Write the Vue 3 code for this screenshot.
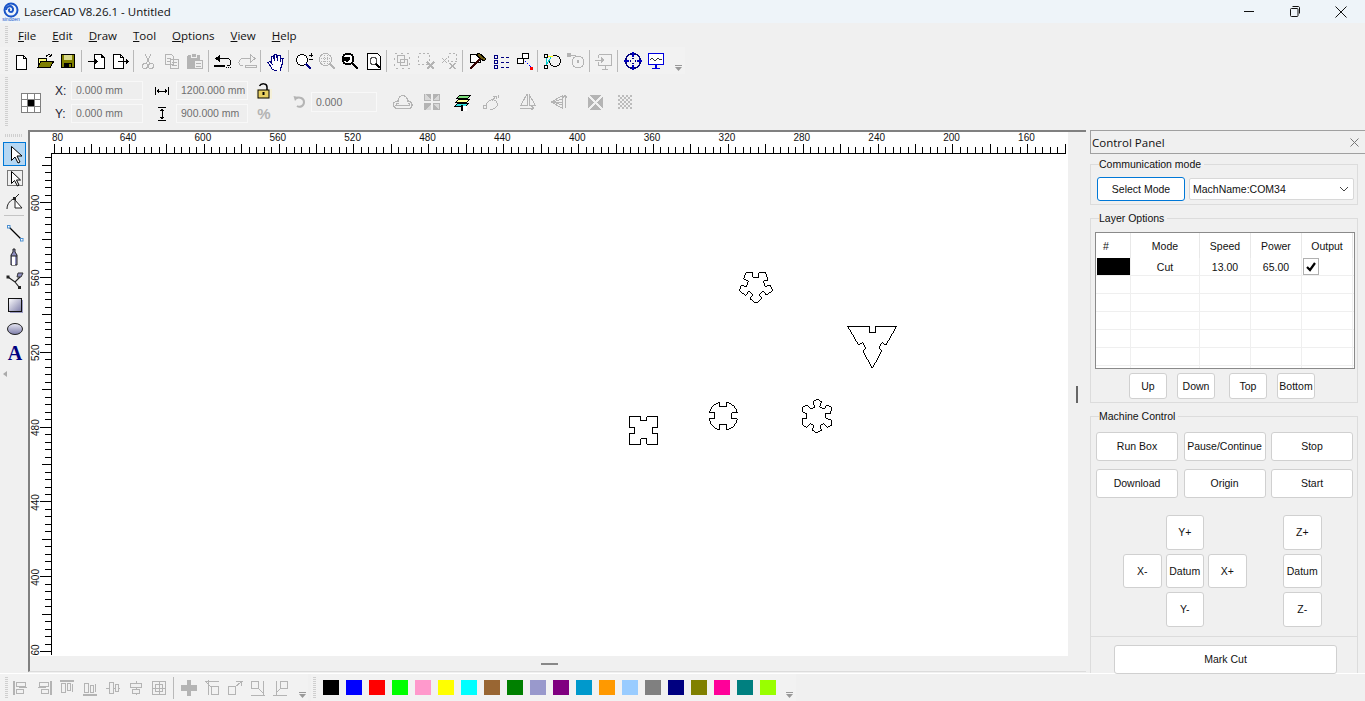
<script setup>
// greyed out icons share one wrapper
const dim = (s) => `<g fill="none" stroke="#b4b4b4">${s}</g>`;
const DOC = "h7l3 3v11h-10z";

const menus = [
  { key: "F", rest: "ile" },
  { key: "E", rest: "dit" },
  { key: "D", rest: "raw" },
  { key: "T", rest: "ool" },
  { key: "O", rest: "ptions" },
  { key: "V", rest: "iew" },
  { key: "H", rest: "elp" },
];

const topIcons = [
  `<path d="M5.5 4.5${DOC}" fill="#fff" stroke="#000"/><path d="M12.5 4.5v3h3" fill="none" stroke="#000"/>`,
  `<path d="M3 16V8l2-1h6v3H6z" fill="#ffff80" stroke="#000"/><path d="M3 16.5l3-6.5h13l-4 6.5z" fill="#808000" stroke="#000"/><path d="M11 6c1-3 4-3 5-1M16 5l1-2M16 5h-2.5" fill="none" stroke="#000"/>`,
  `<rect x="3.5" y="3.5" width="13" height="13" fill="#808000" stroke="#000"/><rect x="6" y="4" width="8" height="5" fill="#d9d98c"/><rect x="6" y="12" width="8" height="5" fill="#000"/><rect x="11" y="13" width="2" height="3" fill="#808000"/>`,
  "sep",
  `<path d="M8.5 3.5h6.5l3 3v11h-9.5z" fill="#fff" stroke="#000"/><path d="M15 3.5v3h3M2 10.5h8" fill="none" stroke="#000"/><path d="M9 8l3 2.5-3 2.5z"/>`,
  `<path d="M3.5 3.5${DOC}" fill="#fff" stroke="#000"/><path d="M10.5 3.5v3h3M8 10.5h9" fill="none" stroke="#000"/><path d="M16 8l3 2.5-3 2.5z"/>`,
  "sep",
  dim(`<circle cx="7" cy="15" r="2.5"/><circle cx="13" cy="15" r="2.5"/><path d="M8 13l5-10M12 13L7 3"/>`),
  dim(`<path d="M3.5 3.5h6l2 2v8h-8zM8.5 8.5h8v9h-8zM5 7h4M5 10h3M10 11h5M10 14h5"/>`),
  `<rect x="2" y="4" width="13" height="14" rx="2" fill="#b4b4b4"/><rect x="6" y="2" width="5" height="4" fill="#b4b4b4" stroke="#f0f0f0"/><path d="M9.5 9.5h8v8h-8z" fill="#f0f0f0" stroke="#b4b4b4"/><path d="M11 12h5M11 15h5" stroke="#b4b4b4"/>`,
  "sep",
  `<path d="M6 7.5h7c4 0 5 2 5 4s-2 3.5-4 3.5" fill="none" stroke="#000"/><path d="M2 7.5l5-4v8z"/><rect x="1" y="14" width="11" height="2"/><path d="M13 16.5h5" stroke="#000" stroke-dasharray="1 1"/>`,
  dim(`<path d="M14 7.5H7c-4 0-5 2-5 4s2 3.5 4 3.5M18 7.5l-5-4v8zM8 14.5h11v1.5H8z"/>`),
  "sep",
  `<path d="M7.5 18.5L3 11.5l2-1 2 2.500L6.500 6l2-1 1 5 0-7h2l1 7 .5-6 2 .5 0 6 1-3.500 2 .5-1 6-1 3-1 4.500z" fill="#fff" stroke="#000080"/>`,
  "sep",
  `<circle cx="8" cy="9" r="5.5" fill="#fff" stroke="#000"/><path d="M12 13l5 5" stroke="#000080" stroke-width="2"/><path d="M15 4h4M17 2v4M15 8h4" stroke="#000"/>`,
  dim(`<circle cx="8.5" cy="8.5" r="6"/><path d="M4 7h9M4 10h9M7 4v9M10 4v9" stroke-dasharray="1 1"/><path d="M13 13l5 5" stroke-width="2"/>`),
  `<circle cx="8" cy="8" r="5.5" fill="#fff" stroke="#000" stroke-width="2"/><path d="M4 6h6v2l-3 3-3-1z"/><path d="M12 12l6 6" stroke="#000" stroke-width="2"/>`,
  `<path d="M3.5 2.5h10l3 3v13h-13z" fill="#fff" stroke="#000"/><circle cx="9.5" cy="10" r="3.5" fill="none" stroke="#555"/><path d="M12 13l4 4" stroke="#000" stroke-width="2"/>`,
  "sep",
  dim(`<rect x="2.5" y="2.5" width="15" height="15" stroke-dasharray="2 4"/><rect x="5.5" y="4.5" width="7" height="7"/><rect x="8.5" y="8.5" width="7" height="6"/>`),
  dim(`<rect x="2.5" y="2.5" width="11" height="11" stroke-dasharray="2 2"/><path d="M11 11l7 7M18 11l-7 7" stroke-width="1.6"/>`),
  dim(`<rect x="9.5" y="2.5" width="8" height="8" stroke-dasharray="2 2"/><path d="M3 7l5 5M8 7l-5 5M10 12l7 6M17 12l-7 6" stroke-width="1.3"/>`),
  "sep",
  `<rect x="3.5" y="3.5" width="10" height="8" fill="#fff" stroke="#000"/><path d="M3 18L13 8" stroke="#300" stroke-width="2"/><path d="M9 4l3-2 7 6-2 2z" fill="#6b5a10" stroke="#000"/>`,
  `<path d="M3.5 4.5h3v3h-3zM3.5 9.5h3v3h-3zM3.5 14.5h3v3h-3zM10 6h3M10 11h3M10 16h3M15 6h3M15 11h3M15 16h3" fill="none" stroke="#000080"/>`,
  `<rect x="8.5" y="2.5" width="6" height="5" fill="#fff" stroke="#000"/><rect x="3.5" y="7.5" width="6" height="5" fill="#fff" stroke="#000"/><path d="M11 10l6 6" stroke="#00f" stroke-dasharray="1.5 1"/><rect x="16" y="16" width="3" height="3" fill="#f00"/>`,
  "sep",
  `<circle cx="13" cy="10" r="5.5" fill="none" stroke="#000"/><path d="M4 5h7" stroke="#ff0"/><path d="M4 5v10M4 15l5-9" stroke="#0cc"/><rect x="2.5" y="3.5" width="3" height="3" fill="#fff" stroke="#000"/><rect x="2.5" y="14.5" width="3" height="3" fill="#fff" stroke="#000"/>`,
  dim(`<circle cx="12" cy="11" r="6"/><path d="M2 4h8"/><path d="M12 9v3" stroke-width="2"/><rect x="1" y="2" width="3" height="3" fill="#b4b4b4"/>`),
  "sep",
  dim(`<path d="M5 3.5h12.5v11h-13V11M4.5 7V3.5M8 18h6M11 14.5V18M1 9h8"/><path d="M7 6l3 3-3 3z" fill="#b4b4b4"/>`),
  "sep",
  `<circle cx="10" cy="10" r="7.5" fill="none" stroke="#000080" stroke-width="1.5"/><path d="M10 1v5M10 14v5M1 10h5M14 10h5" stroke="#0000c0" stroke-width="2"/><path d="M6 10l2-1v2zM14 10l-2-1v2zM10 6l-1 2h2zM10 14l-1-2h2z" fill="#000080"/>`,
  `<rect x="2.5" y="2.5" width="15" height="11" fill="#fff" stroke="#0000e0" stroke-width="1.5"/><path d="M4 9l2-2 3 3 3-3 2 2 2-1" fill="none" stroke="#333"/><path d="M10 14v3M6 17.5h8" stroke="#0000e0" stroke-width="1.5"/>`,
];

const checkerRows = [4, 6, 8, 10, 12, 14, 16].map((y, i) => `M${i % 2 ? 5 : 3} ${y}H17`).join("");

const propIcons = [
  { gap: 16, svg: dim(`<path d="M5 9C2 9 0 11 .5 13.5S3 16.5 5 16.5h10c3 0 4.5-2 4-4.5s-3-3-4.5-3C14.5 6 12.5 3.5 10 3.5S5 6 5 9z" stroke-width="1.3"/><path d="M6 11c-2 0-3 1-3 2.5h13.5c.5-1 0-2.5-2-2.5"/>`) },
  { gap: 9, svg: `<path d="M2 2h7v7H2zM11 2h7v7h-7zM2 11h7v7H2zM11 11h7v7h-7z" fill="#b4b4b4"/><path d="M3 2l6 6-6 0zM17 2v6h-6zM9 12v6H3zM11 12h6v6z" fill="#d8d8d8"/>` },
  { gap: 11, svg: `<path d="M4 6l3-3h11l-3 3z" fill="#7fe07f" stroke="#000"/><path d="M3 10l3-3h11l-3 3z" fill="#ffff99" stroke="#000"/><path d="M2 14l3-3h11l-3 3z" fill="#30e0e0" stroke="#000"/><path d="M9 13v6" stroke="#000" stroke-width="1.5"/><rect x="10" y="14" width="4" height="5" fill="#fff"/>` },
  { gap: 9, svg: dim(`<path d="M4 14c0-4 4-7 8-6 3 1 4 4 3 6s-4 4-7 3"/><rect x="1.5" y="13.5" width="3" height="3"/><path d="M10 9l4-5M11 4h3v3M16 3v3"/>`) },
  { gap: 16, svg: dim(`<path d="M9 2v11H3zM11 2v11h6zM2 16h14M13 14l3 2-3 2"/>`) },
  { gap: 11, svg: dim(`<path d="M13 4v12L2 10zM13 10H2M13 7L4 10l9 3M16 16V3M14 6l2-3 2 3"/>`) },
  { gap: 17, svg: `<rect x="2" y="3" width="15" height="15" fill="#b4b4b4"/><path d="M2 3l15 15M17 3L2 18" stroke="#f0f0f0" stroke-width="2.5"/>` },
  { gap: 9, svg: `<path d="${checkerRows}" stroke="#bcbcbc" stroke-width="2" stroke-dasharray="2 2"/>` },
];

const leftIcons = [
  { active: true, svg: `<path d="M6.5 2.5v14l3.5-3.5 3 6 2-1-3-6h5z" fill="#fff" stroke="#000"/>` },
  { svg: `<rect x="2.5" y="2.5" width="15" height="15" fill="none" stroke="#000" stroke-dasharray="1 1"/><path d="M6.5 3.5v12l3-3 3 5.5 1.5-1-2.5-5h4z" fill="#fff" stroke="#000"/>` },
  { svg: `<path d="M2 17c0-6 4-9 8-11l4-4" fill="none" stroke="#222"/><path d="M10 8l7 8h-7z" fill="#fff" stroke="#222"/><rect x="8" y="5" width="3" height="3" fill="#222"/>` },
  { sep: true },
  { svg: `<path d="M4 4l12 12" stroke="#000" stroke-width="1.3"/><rect x="2.5" y="2.5" width="2.5" height="2.5" fill="#fff" stroke="#4a8ed0"/><rect x="15.5" y="15.5" width="2.5" height="2.5" fill="#fff" stroke="#4a8ed0"/>` },
  { svg: `<path d="M6 18V8l2-3V2h2v3l2 3v10z" fill="#8d8dc0" stroke="#222"/><path d="M7 18V9h3v9z" fill="#fff"/><path d="M6 9h6" stroke="#222"/>` },
  { svg: `<path d="M3 6l7 5 5-5M10 11l4 5" fill="none" stroke="#222" stroke-width="1.2"/><rect x="1.5" y="4.5" width="3" height="3" fill="#222"/><rect x="13" y="15" width="3" height="3" fill="#222"/><path d="M13 2h5l-2 4h-4z" fill="#8d8dc0" stroke="#333"/>` },
  { svg: `<defs><linearGradient id="lg1" x1="0" y1="0" x2="1" y2="1"><stop offset="0" stop-color="#fff"/><stop offset="1" stop-color="#7c7ca8"/></linearGradient></defs><rect x="5" y="5" width="13" height="13" fill="#9c9cc4"/><rect x="3.5" y="3.5" width="13" height="13" fill="url(#lg1)" stroke="#111"/>` },
  { svg: `<defs><linearGradient id="lg2" x1="0" y1="0" x2="0" y2="1"><stop offset="0" stop-color="#e8e8f4"/><stop offset="1" stop-color="#7c7ca8"/></linearGradient></defs><ellipse cx="10" cy="10" rx="7.5" ry="5.5" fill="url(#lg2)" stroke="#222"/>` },
  { svg: `<text x="10" y="17" text-anchor="middle" font-family="Liberation Serif" font-weight="700" font-size="20" fill="#000080">A</text>` },
];

const alignIcons = [
  dim(`<path d="M3 3v14" stroke-width="2"/><rect x="5.5" y="4.5" width="9" height="4"/><rect x="5.5" y="11.5" width="7" height="4"/><path d="M8 9.5h8"/>`),
  dim(`<path d="M17 3v14" stroke-width="2"/><rect x="5.5" y="4.5" width="9" height="4"/><rect x="7.5" y="11.5" width="7" height="4"/><path d="M4 9.5h8"/>`),
  dim(`<path d="M3 3h14" stroke-width="2"/><rect x="4.5" y="5.5" width="4" height="9"/><rect x="10.5" y="5.5" width="3" height="7"/><path d="M15.5 6v8"/>`),
  dim(`<path d="M3 17h14" stroke-width="2"/><rect x="4.5" y="5.5" width="4" height="9"/><rect x="10.5" y="7.5" width="3" height="7"/><path d="M15.5 6v8"/>`),
  dim(`<path d="M3 10h14"/><rect x="6.5" y="4.5" width="4" height="11" fill="#f0f0f0"/><rect x="12.5" y="6.5" width="3" height="7" fill="#f0f0f0"/>`),
  dim(`<path d="M10 3v14"/><rect x="4.5" y="5.5" width="11" height="4" fill="#f0f0f0"/><rect x="6.5" y="11.5" width="7" height="4" fill="#f0f0f0"/>`),
  dim(`<rect x="3.5" y="3.5" width="13" height="13"/><path d="M10 3v14M3 10h14"/><rect x="6.5" y="6.5" width="7" height="7"/>`),
  "sep",
  `<path d="M8 2h4v5h6v6h-6v5H8v-5H2V7h6z" fill="#b4b4b4"/>`,
  dim(`<path d="M3 3h14M6 2v15"/><rect x="9.5" y="8.5" width="7" height="8"/><path d="M4 4l5 5"/>`),
  dim(`<path d="M16 3v5M11 3h7"/><rect x="3.5" y="8.5" width="7" height="8"/><path d="M16 4l-6 5"/>`),
  dim(`<path d="M3 17h14M15 3v15"/><rect x="3.5" y="3.5" width="7" height="7"/><path d="M10 10l5 5"/>`),
  dim(`<path d="M2 17h14M5 3v15"/><rect x="9.5" y="3.5" width="7" height="7"/><path d="M10 10l-5 5"/>`),
];

const palette = [
  "#000000", "#0000ff", "#ff0000", "#00ff00", "#ff99cc", "#ffff00", "#00ffff",
  "#996633", "#008000", "#9999cc", "#800080", "#0099cc", "#ff9900", "#99ccff",
  "#808080", "#000080", "#808000", "#ff0099", "#008080", "#99ff00",
];

const machineButtons = ["Run Box", "Pause/Continue", "Stop", "Download", "Origin", "Start"];
const jogButtons = [
  { label: "Y+", col: 2, row: 1 },
  { label: "Z+", col: 5, row: 1 },
  { label: "X-", col: 1, row: 2 },
  { label: "Datum", col: 2, row: 2 },
  { label: "X+", col: 3, row: 2 },
  { label: "Datum", col: 5, row: 2 },
  { label: "Y-", col: 2, row: 3 },
  { label: "Z-", col: 5, row: 3 },
];

// ruler, in page pixels
const STEP = 7.487;
const hTicks = [];
for (let i = 0; i <= 135; i++) {
  const top = i % 5 === 0 ? 144 : 147;
  hTicks.push(`M${Math.round(54 + i * STEP) + 0.5} ${top}V153`);
}
const vTicks = [];
for (let i = -6; i <= 60; i++) {
  const k = ((i % 10) + 10) % 10;
  const left = k === 0 ? 40 : k === 5 ? 42 : 45;
  vTicks.push(`M${left} ${Math.round(202 + i * STEP) + 0.5}H51`);
}
const rulerPath = [...hTicks, ...vTicks].join("");
const hLabels = ["640", "600", "560", "520", "480", "440", "400", "360", "320", "280", "240", "200", "160"];
const vLabels = ["600", "560", "520", "480", "440", "400", "60"];
</script>

<template>
  <div class="app">
    <div class="titlebar">
      <svg class="logo" viewBox="0 0 18 20" width="18" height="20">
        <circle cx="9" cy="8" r="6.5" fill="none" stroke="#1a55c8" stroke-width="2"/>
        <path d="M4 8c0-3 4-5 6-3s1 5-1 5-3-2-1-3" fill="none" stroke="#1a55c8" stroke-width="2"/>
        <text x="9" y="19" text-anchor="middle" font-size="5" font-family="Liberation Sans" fill="#1a55c8">sindoen</text>
      </svg>
      <span class="title-text">LaserCAD V8.26.1 - Untitled</span>
      <div class="win-buttons">
        <svg viewBox="0 0 12 12" width="12" height="12"><path d="M1 5.5h10" stroke="#111"/></svg>
        <svg viewBox="0 0 12 12" width="12" height="12"><rect x="1.5" y="2.5" width="7.5" height="8" rx="1" fill="none" stroke="#111"/><path d="M3.5 .5h6a1.5 1.5 0 0 1 1 1v6" fill="none" stroke="#111"/></svg>
        <svg viewBox="0 0 12 12" width="12" height="12"><path d="M.5 .5l11 11M11.5 .5l-11 11" stroke="#111"/></svg>
      </div>
    </div>

    <div class="menubar">
      <span class="grip"></span>
      <span v-for="m in menus" :key="m.key" class="menu-item"><u>{{ m.key }}</u>{{ m.rest }}</span>
    </div>

    <div class="toolbar">
      <span class="grip"></span>
      <template v-for="(icon, i) in topIcons" :key="i">
        <span v-if="icon === 'sep'" class="tb-sep"></span>
        <span v-else class="tb-btn"><svg viewBox="0 0 20 20" width="20" height="20" shape-rendering="crispEdges" v-html="icon"></svg></span>
      </template>
      <svg class="more" viewBox="0 0 7 6" width="7" height="6"><path d="M0 0h7v1H0zM0 2h7L3.5 6z" fill="#999"/></svg>
    </div>

    <div class="propbar">
      <span class="grip"></span>
      <svg class="anchor" viewBox="0 0 20 20" width="20" height="20" shape-rendering="crispEdges">
        <path d="M.5 .5h19v19H.5zM6.5 .5v19M13.5 .5v19M.5 6.5h19M.5 13.5h19" fill="#fff" stroke="#808080"/>
        <rect x="7" y="7" width="6" height="6"/>
      </svg>
      <div class="coords">
        <span class="coord-label">X:</span>
        <span class="field">0.000 mm</span>
        <svg class="size-icon" viewBox="0 0 14 14" width="14" height="14" shape-rendering="crispEdges"><path d="M.5 3v8M13.5 3v8M3 7h8" stroke="#000"/><path d="M1 7l3-2.5v5zM13 7l-3-2.5v5z"/></svg>
        <span class="field">1200.000 mm</span>
        <svg class="lock" viewBox="0 0 16 16" width="16" height="16"><rect x="0" y="6" width="16" height="10" fill="#f5f0d8"/><path d="M11 7V4C11 0 5 0 3.5 3" fill="none" stroke="#000" stroke-width="1.5"/><rect x="2" y="7" width="11" height="8" fill="#e8d060" stroke="#000"/><rect x="6.5" y="9" width="2" height="3"/></svg>
        <span class="coord-label">Y:</span>
        <span class="field">0.000 mm</span>
        <svg class="size-icon" viewBox="0 0 14 14" width="14" height="14" shape-rendering="crispEdges"><path d="M3 .5h8M3 13.5h8M7 3v8" stroke="#000"/><path d="M7 1L4.5 4h5zM7 13l-2.5-3h5z"/></svg>
        <span class="field">900.000 mm</span>
        <span class="percent">%</span>
      </div>
      <svg class="rotate-icon" viewBox="0 0 20 20" width="20" height="20"><path d="M7 6.5c3-2 8-.5 8 3.5s-4 6-7 4" fill="none" stroke="#b4b4b4" stroke-width="2"/><path d="M4.5 4l5 1-3.5 4z" fill="#b4b4b4"/></svg>
      <span class="field rotate-field">0.000</span>
      <svg v-for="(p, i) in propIcons" :key="i" viewBox="0 0 20 20" width="20" height="20" shape-rendering="crispEdges" :style="{ marginLeft: p.gap + 'px' }" v-html="p.svg"></svg>
    </div>

    <div class="main">
      <div class="left-tools">
        <span class="grip-h"></span>
        <template v-for="(t, i) in leftIcons" :key="i">
          <span v-if="t.sep" class="lt-sep"></span>
          <span v-else class="lt-btn" :class="{ active: t.active }"><svg viewBox="0 0 20 20" width="20" height="20" v-html="t.svg"></svg></span>
        </template>
        <svg class="lt-more" viewBox="0 0 4 6" width="4" height="6"><path d="M4 0v6L0 3z" fill="#aaa"/></svg>
      </div>

      <div class="workspace">
        <div class="canvas-row">
          <svg class="canvas" viewBox="30 132 1038 524" width="1038" height="524">
            <path d="M51 153.5H1066M51.5 153V655" stroke="#000" fill="none" shape-rendering="crispEdges"/>
            <path :d="rulerPath" stroke="#000" fill="none" shape-rendering="crispEdges"/>
            <text x="52" y="141" class="ruler-text">80</text>
            <text v-for="(l, i) in hLabels" :key="l" :x="128 + i * 74.87" y="141" text-anchor="middle" class="ruler-text">{{ l }}</text>
            <text v-for="(l, i) in vLabels" :key="i" text-anchor="middle" class="ruler-text" :transform="`translate(38.5 ${i === 6 ? 650 : 203 + i * 74.87}) rotate(-90)`">{{ l }}</text>

            <!-- traced from the drawing, at 3x -->
            <g transform="translate(620 260) scale(.3333)" fill="none" stroke="#000" stroke-width="3" shape-rendering="crispEdges">
              <path d="M28 470H62V483H80V470H113V502H97V520H113V553H80V536H62V553H28V520H45V502H28Z"/>
              <path d="M300 441H320V427A42 42 0 0 1 352 459H335V477H352A42 42 0 0 1 320 510V493H300V510A42 42 0 0 1 268 477H285V459H268A42 42 0 0 1 300 427Z"/>
              <path d="M378 38H398V52H416V38H437L444 60L430 64L436 80L450 75L459 92L439 105L430 94L417 104L426 115L408 130L390 116L399 104L386 94L377 106L358 92L364 75L379 80L385 62L371 58Z"/>
              <path d="M592 418L605 425L599 441L611 447L622 435L635 442L632 461L617 459L617 475L633 480L636 495L622 503L611 491L600 497L605 511L590 518L577 511L582 497L570 491L559 503L547 493L546 477L561 475L561 461L548 457L549 441L561 435L572 447L584 441L579 425Z"/>
              <path d="M683 199H748V218H766V199H830L798 255L786 248L776 265L786 272L757 325L728 272L738 265L728 248L716 255Z"/>
            </g>
          </svg>
          <div class="split-v"><span></span></div>
        </div>
        <div class="split-h"><span></span></div>
      </div>

      <div class="panel">
        <div class="panel-title">
          <span>Control Panel</span>
          <svg viewBox="0 0 9 9" width="9" height="9"><path d="M.5 .5l8 8M8.5 .5l-8 8" stroke="#777"/></svg>
        </div>

        <div class="group group-comm">
          <span class="legend">Communication mode</span>
          <button class="btn btn-mode">Select Mode</button>
          <div class="select">
            <span>MachName:COM34</span>
            <svg viewBox="0 0 10 6" width="10" height="6"><path d="M1 1l4 4 4-4" fill="none" stroke="#444"/></svg>
          </div>
        </div>

        <div class="group group-layer">
          <span class="legend">Layer Options</span>
          <div class="layer-table">
            <div class="lt-head">
              <span class="c0 hash">#</span><span class="c1">Mode</span><span class="c2">Speed</span><span class="c2">Power</span><span class="c2">Output</span>
            </div>
            <div class="lt-row">
              <span class="c0 swatch"></span><span class="c1">Cut</span><span class="c2">13.00</span><span class="c2">65.00</span>
              <span class="c2 check-cell">
                <span class="checkbox"><svg viewBox="0 0 12 12" width="12" height="12"><path d="M2 6l3 3 5-7" fill="none" stroke="#000" stroke-width="2.2"/></svg></span>
              </span>
            </div>
            <div v-for="n in 6" :key="n" class="lt-row">
              <span class="c0"></span><span class="c1"></span><span class="c2"></span><span class="c2"></span><span class="c2"></span>
            </div>
          </div>
          <div class="layer-actions">
            <button class="btn">Up</button>
            <button class="btn">Down</button>
            <button class="btn gap-wide">Top</button>
            <button class="btn">Bottom</button>
          </div>
        </div>

        <div class="group group-machine">
          <span class="legend">Machine Control</span>
          <div class="machine-grid">
            <button v-for="b in machineButtons" :key="b" class="btn">{{ b }}</button>
          </div>
          <div class="jog-grid">
            <button v-for="(j, i) in jogButtons" :key="i" class="btn" :style="{ gridColumn: j.col, gridRow: j.row }">{{ j.label }}</button>
          </div>
          <div class="divider"></div>
          <button class="btn mark-cut">Mark Cut</button>
        </div>
      </div>
    </div>

    <div class="bottombar">
      <div class="align-bar">
        <span class="grip"></span>
        <template v-for="(icon, i) in alignIcons" :key="i">
          <span v-if="icon === 'sep'" class="al-sep"></span>
          <span v-else class="al-btn"><svg viewBox="0 0 20 20" width="20" height="20" shape-rendering="crispEdges" v-html="icon"></svg></span>
        </template>
        <svg class="more more-b" viewBox="0 0 7 6" width="7" height="6"><path d="M0 0h7v1H0zM0 2h7L3.5 6z" fill="#999"/></svg>
      </div>
      <div class="palette-bar">
        <span class="grip"></span>
        <span v-for="c in palette" :key="c" class="color" :style="{ background: c }"></span>
        <svg class="more more-c" viewBox="0 0 7 6" width="7" height="6"><path d="M0 0h7v1H0zM0 2h7L3.5 6z" fill="#999"/></svg>
      </div>
    </div>
  </div>
</template>

<style scoped>
.app {
  width: 1365px;
  height: 701px;
  display: flex;
  flex-direction: column;
  background: #f0f0f0;
  color: #111;
  font-family: "Liberation Sans", Arial, sans-serif;
  font-size: 10.5px;
  overflow: hidden;
}
.titlebar {
  height: 23px;
  flex: none;
  display: flex;
  align-items: center;
  background: #eef4f9;
  position: relative;
}
.logo {
  margin-left: 2px;
  flex: none;
}
.title-text {
  margin-left: 4px;
  font-family: "Open Sans", sans-serif;
  font-size: 11.5px;
  color: #111;
}
.win-buttons {
  margin-left: auto;
  display: flex;
  gap: 34px;
  padding-right: 18px;
}
.grip {
  position: absolute;
  left: 5px;
  top: 3px;
  bottom: 3px;
  width: 3px;
  background: repeating-linear-gradient(#cfcfcf 0 1px, transparent 1px 2px);
}
.menubar {
  height: 24px;
  flex: none;
  position: relative;
  display: flex;
  align-items: center;
  gap: 16px;
  padding-left: 18px;
  font-family: "Open Sans", sans-serif;
  font-size: 11.5px;
}
.toolbar {
  height: 27px;
  width: 685px;
  flex: none;
  position: relative;
  display: flex;
  align-items: center;
  padding-left: 9.6px;
  box-sizing: border-box;
  background: #f2f2f2;
}
.tb-btn {
  width: 23.4px;
  height: 23px;
  flex: none;
  display: flex;
  align-items: center;
  justify-content: center;
}
.tb-sep {
  width: 5px;
  height: 22px;
  flex: none;
  box-sizing: border-box;
  border-left: 1px solid #b9b9b9;
  position: relative;
  left: 1px;
}
.more {
  flex: none;
  margin-left: 7px;
  margin-top: 14px;
}
.propbar {
  height: 56px;
  flex: none;
  position: relative;
  display: flex;
  align-items: center;
}
.anchor {
  margin-left: 21px;
  margin-top: 2px;
  flex: none;
}
.coords {
  margin-left: 14px;
  display: grid;
  grid-template-columns: 16px 72px 33px 72px 32px;
  grid-auto-rows: 19px;
  row-gap: 4px;
  align-items: center;
  flex: none;
}
.coord-label {
  color: #223;
  font-size: 12px;
}
.field {
  box-sizing: border-box;
  height: 100%;
  display: flex;
  align-items: center;
  padding: 0 0 1px 4px;
  background: #eeeeee;
  border: 1.5px solid #f8f8f8;
  color: #6f6f6f;
  white-space: nowrap;
}
.size-icon {
  margin-left: 12px;
}
.lock {
  justify-self: center;
}
.percent {
  justify-self: center;
  color: #b4b4b4;
  font-weight: 700;
  font-size: 15px;
}
.rotate-icon {
  margin-left: 9px;
  flex: none;
}
.rotate-field {
  width: 66px;
  height: 20px;
  margin-left: 2px;
  flex: none;
}
.main {
  flex: 1;
  min-height: 0;
  display: flex;
}
.left-tools {
  width: 28px;
  flex: none;
  display: flex;
  flex-direction: column;
  align-items: center;
  box-sizing: border-box;
}
.grip-h {
  width: 18px;
  height: 3px;
  margin-top: 4px;
  margin-bottom: 5px;
  background: repeating-linear-gradient(90deg, #cfcfcf 0 1px, transparent 1px 2px);
}
.lt-btn {
  width: 23px;
  height: 24px;
  flex: none;
  display: flex;
  align-items: center;
  justify-content: center;
  box-sizing: border-box;
}
.lt-btn svg {
  margin-left: 1px;
}
.lt-btn.active {
  background: #b5d7f3;
  border: 1px solid #0078d7;
}
.lt-sep {
  width: 20px;
  height: 1px;
  background: #c4c4c4;
  margin: 1px 0 5px;
  flex: none;
}
.lt-more {
  margin-top: 6px;
  margin-right: 18px;
}
.workspace {
  width: 1056px;
  flex: none;
  border-left: 2px solid #808080;
  border-top: 2px solid #808080;
  border-bottom: 1px solid #dcdcdc;
  margin-bottom: 1px;
  display: flex;
  flex-direction: column;
  box-sizing: content-box;
}
.canvas-row {
  display: flex;
  height: 524px;
}
.canvas {
  display: block;
  background: #fff;
  flex: none;
}
.ruler-text {
  font-family: "Liberation Sans", sans-serif;
  font-size: 10px;
  fill: #111;
}
.split-v {
  flex: 1;
  display: flex;
  align-items: center;
  justify-content: center;
}
.split-v span {
  width: 2px;
  height: 17px;
  background: #666;
}
.split-h {
  flex: 1;
  width: 1038px;
  display: flex;
  align-items: center;
  justify-content: center;
}
.split-h span {
  width: 17px;
  height: 2px;
  background: #888;
}
.panel {
  margin-left: 4px;
  width: 275px;
  flex: none;
  padding-right: 7px;
  box-sizing: border-box;
}
.panel-title {
  height: 24px;
  margin-right: -7px;
  box-sizing: border-box;
  border: 1px solid #a0a0a0;
  border-right: 0;
  display: flex;
  align-items: center;
  justify-content: space-between;
  padding: 0 6px 0 1px;
  font-family: "Open Sans", sans-serif;
  font-size: 11.5px;
}
.group {
  position: relative;
  box-sizing: border-box;
  border: 1px solid #dcdcdc;
  margin-top: 13px;
}
.legend {
  position: absolute;
  top: -8px;
  left: 8px;
  padding-right: 3px;
  background: #f0f0f0;
  line-height: 14px;
  white-space: nowrap;
}
.btn {
  box-sizing: border-box;
  padding: 0;
  background: #fff;
  border: 1px solid #d0d0d0;
  border-radius: 3px;
  color: #111;
  font: inherit;
}
.group-comm {
  margin-top: 10px;
  height: 41px;
  display: flex;
  align-items: center;
  gap: 4px;
  padding: 9px 0 0 6px;
}
.btn-mode {
  width: 88px;
  height: 24px;
  border-color: #0078d7;
}
.select {
  width: 165px;
  height: 22px;
  box-sizing: border-box;
  background: #fff;
  border: 1px solid #d8d8d8;
  border-radius: 2px;
  display: flex;
  align-items: center;
  justify-content: space-between;
  padding: 0 4px 0 3px;
}
.group-layer {
  height: 185px;
  padding: 13px 0 0 4px;
}
.layer-table {
  width: 260px;
  height: 137px;
  box-sizing: border-box;
  border: 1px solid #8a8a8a;
  background: #fff;
  overflow: hidden;
}
.lt-head,
.lt-row {
  display: flex;
  text-align: center;
}
.lt-head {
  height: 25px;
  line-height: 26px;
}
.lt-head span {
  box-sizing: border-box;
  border-right: 1px solid #e8e8e8;
}
.lt-head .hash {
  text-align: left;
  padding-left: 7px;
}
.lt-row {
  height: 18px;
  line-height: 19px;
  border-bottom: 1px solid #efefef;
  box-sizing: border-box;
}
.lt-row span {
  box-sizing: border-box;
  border-right: 1px solid #efefef;
}
.c0 {
  width: 35px;
  flex: none;
}
.c1 {
  width: 69px;
  flex: none;
}
.c2 {
  width: 51px;
  flex: none;
}
.swatch {
  background: #000;
  margin-left: 1px;
  width: 34px;
}
.check-cell {
  display: flex;
  padding-left: 1px;
}
.lt-row .checkbox {
  width: 16px;
  height: 17px;
  box-sizing: border-box;
  border: 1px solid #b0b0b0;
  background: #fff;
  display: flex;
  align-items: center;
  justify-content: center;
}
.layer-actions {
  display: flex;
  gap: 10px;
  margin: 4px 0 0 34px;
}
.layer-actions .btn {
  width: 38px;
  height: 26px;
}
.layer-actions .gap-wide {
  margin-left: 4px;
}
.group-machine {
  height: 257px;
  border-bottom: 0;
  padding-top: 14.5px;
}
.machine-grid {
  display: grid;
  grid-template-columns: repeat(3, 82px);
  grid-auto-rows: 29.5px;
  column-gap: 5.5px;
  row-gap: 7.5px;
  margin-left: 5px;
}
.jog-grid {
  display: grid;
  grid-template-columns: repeat(3, 38.5px) 28.5px 38.5px;
  grid-auto-rows: 34.5px;
  gap: 4px;
  margin: 17px 0 0 32px;
}
.divider {
  height: 1px;
  background: #dcdcdc;
  margin-top: 9px;
}
.mark-cut {
  display: block;
  width: 223px;
  height: 29px;
  margin: 8px 0 0 23px;
}
.bottombar {
  height: 27px;
  flex: none;
  display: flex;
  border-top: 1px solid #fff;
  box-sizing: content-box;
}
.align-bar {
  position: relative;
  width: 308px;
  flex: none;
  display: flex;
  align-items: center;
  padding-left: 9.5px;
  box-sizing: border-box;
  background: #f2f2f2;
}
.al-btn {
  width: 23px;
  height: 23px;
  flex: none;
  display: flex;
  align-items: center;
  justify-content: center;
}
.al-sep {
  width: 7px;
  height: 22px;
  flex: none;
  box-sizing: border-box;
  border-left: 1px solid #b9b9b9;
  margin-left: 2px;
  margin-right: -2px;
}
.more-b {
  margin-left: 6px;
}
.palette-bar {
  position: relative;
  width: 485px;
  margin-left: 3px;
  flex: none;
  display: flex;
  align-items: center;
  gap: 7px;
  padding-left: 12px;
  box-sizing: border-box;
  background: #f2f2f2;
}
.palette-bar .grip {
  left: 2px;
}
.color {
  width: 16px;
  height: 15px;
  flex: none;
}
.more-c {
  margin-left: 3px;
}
</style>

<style>
html,
body {
  margin: 0;
  overflow: hidden;
  background: #f0f0f0;
}
</style>
